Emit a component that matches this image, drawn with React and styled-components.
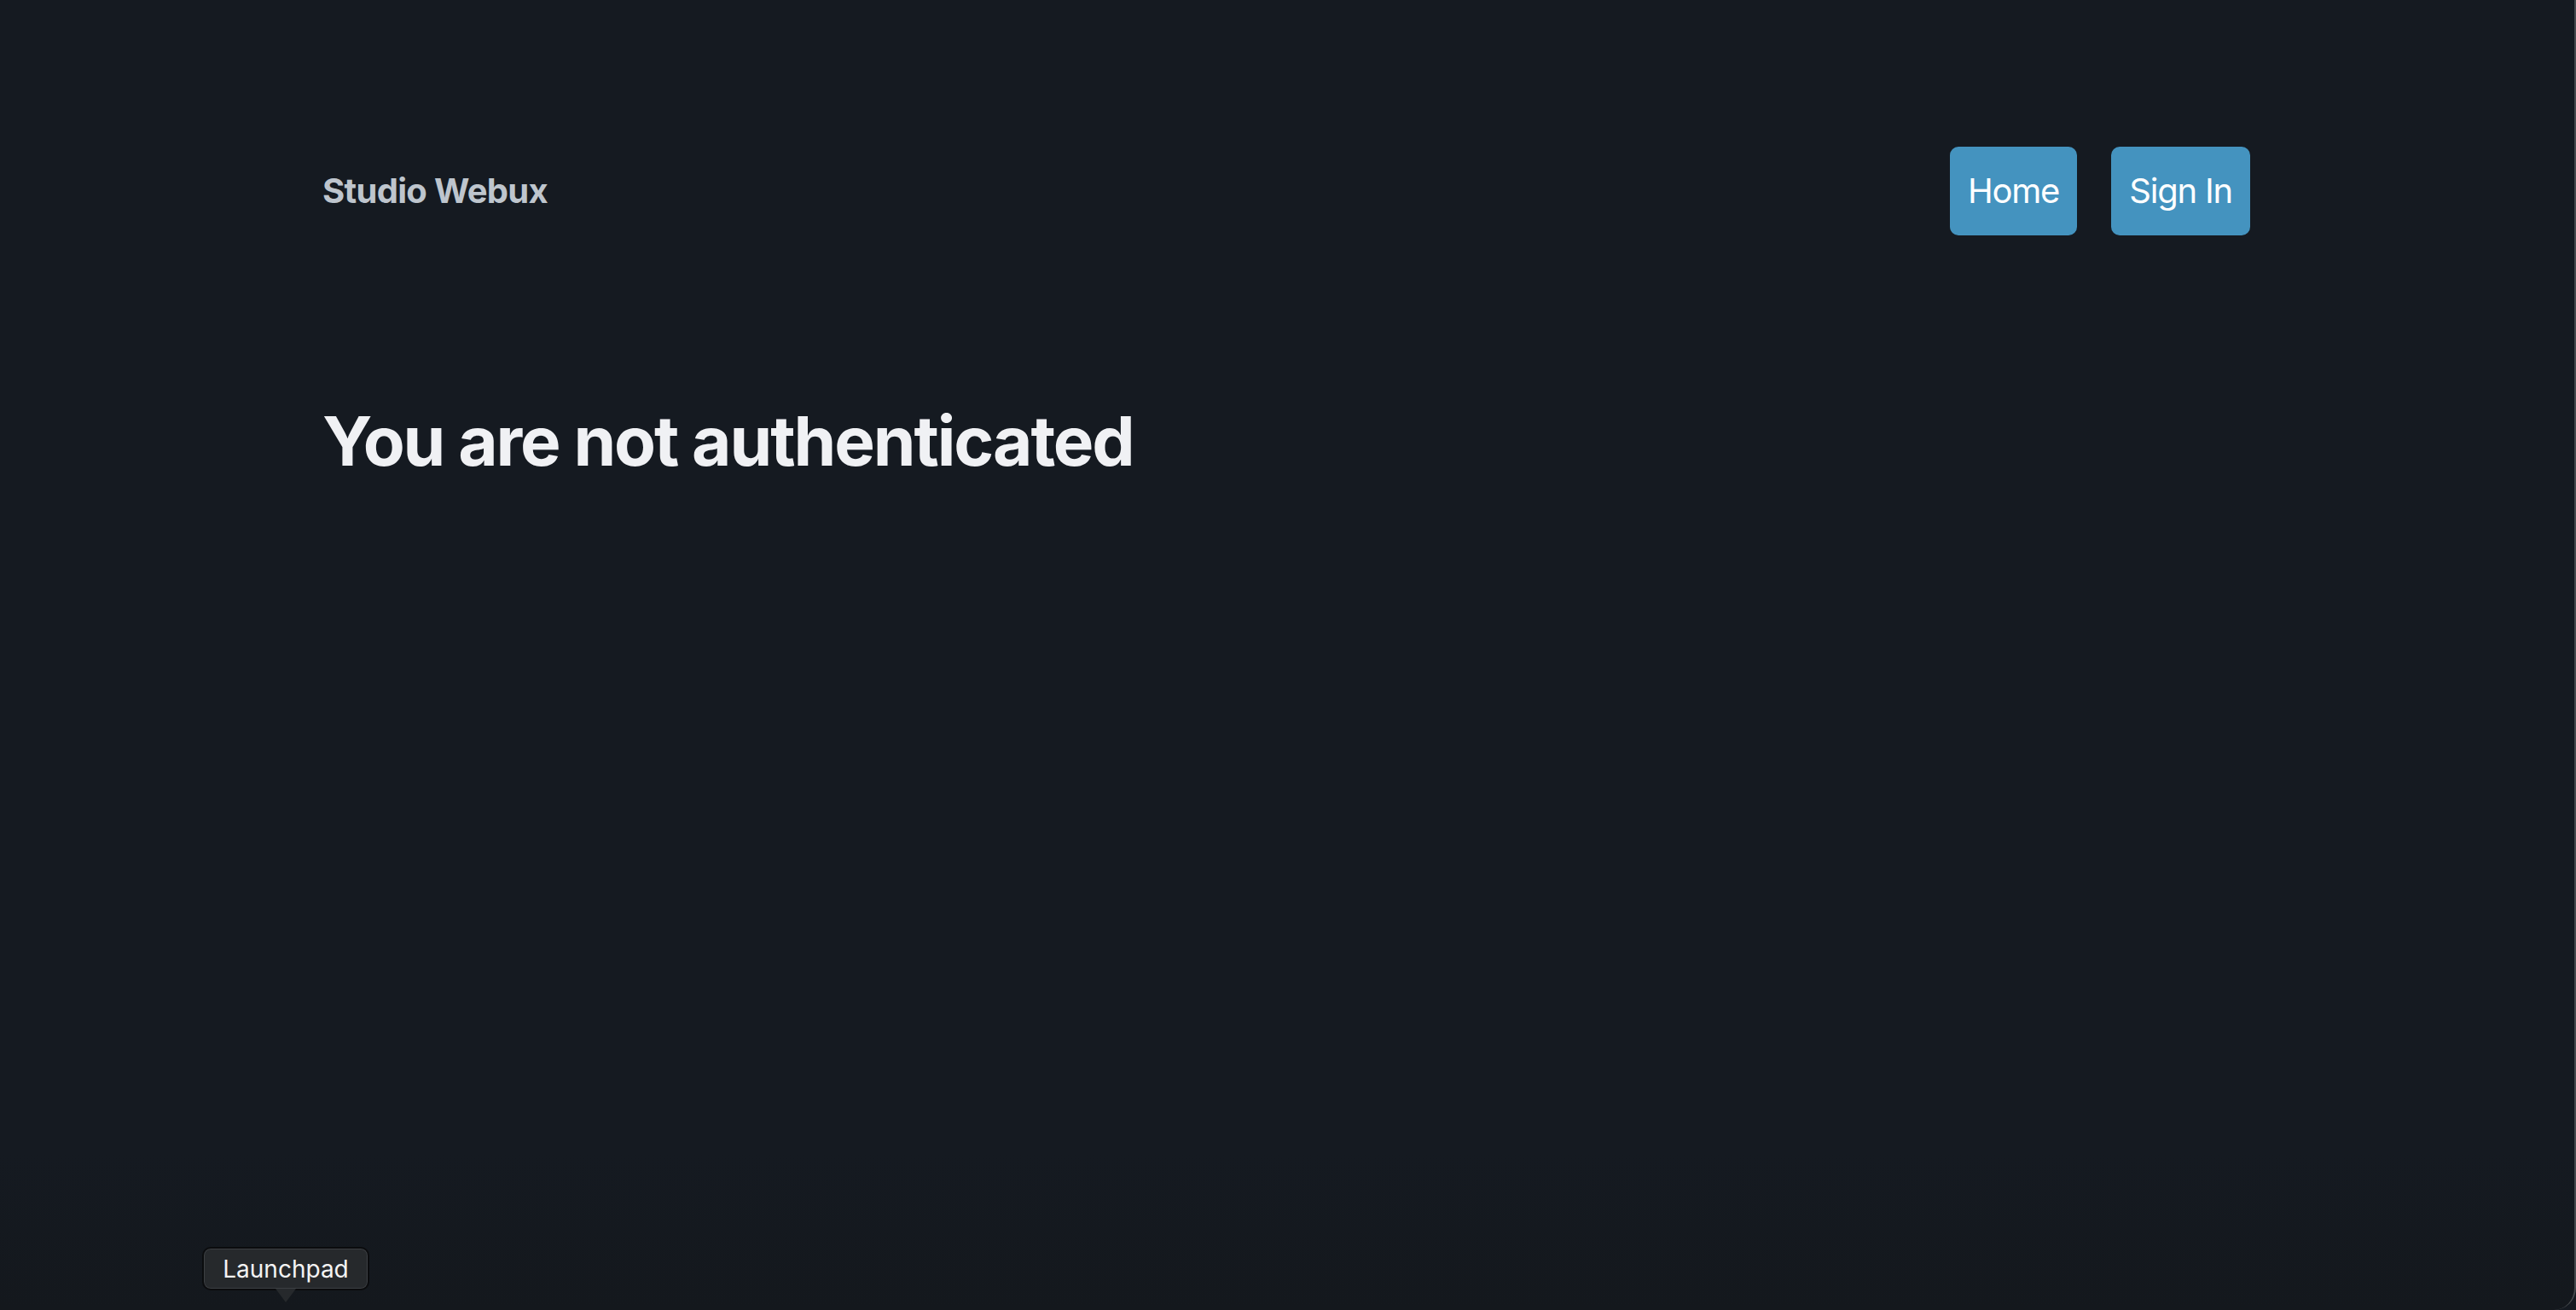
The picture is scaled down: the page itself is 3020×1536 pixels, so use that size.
import React from "react";
import styled, { createGlobalStyle } from "styled-components";

const Global = createGlobalStyle`
  html, body {
    margin: 0;
    padding: 0;
    background: #151a21;
  }
  body {
    font-family: Inter, "Noto Sans", "Liberation Sans", sans-serif;
  }
  * { box-sizing: border-box; }
`;

const Frame = styled.div`
  position: relative;
  height: 1536px;
  background: linear-gradient(to bottom, #151a21 0%, #151a21 88%, #14181d 100%);
  border-right: 2px solid #45494d;
  border-bottom-right-radius: 26px;
  overflow: hidden;
`;

const Container = styled.div`
  width: 2260px;
  margin: 0 0 0 378px;
  display: flex;
  flex-direction: column;
`;

const Header = styled.header`
  display: flex;
  align-items: center;
  justify-content: space-between;
  padding-top: 172px;
`;

const Brand = styled.div`
  font-size: 40px;
  font-weight: 700;
  line-height: 1;
  color: #bec5cd;
  letter-spacing: -0.7px;
`;

const Nav = styled.nav`
  display: flex;
  gap: 40px;
`;

const NavButton = styled.button`
  height: 104px;
  padding: 0 21px;
  border: none;
  border-radius: 10px;
  background: #4493bf;
  color: #ffffff;
  font-family: inherit;
  font-size: 40px;
  font-weight: 400;
  line-height: 1;
  letter-spacing: -1.2px;
  cursor: pointer;
`;

const Heading = styled.h1`
  margin: 193px 0 0;
  font-size: 80px;
  font-weight: 700;
  line-height: 1.2;
  color: #f0f1f4;
  letter-spacing: -2.1px;
`;

const Tooltip = styled.div`
  position: absolute;
  left: 237px;
  top: 1462px;
  width: 196px;
  height: 51px;
  display: flex;
  align-items: center;
  justify-content: center;
  background: #26292c;
  border: 2px solid #0b0c0e;
  box-shadow: inset 0 0 0 1px #3c3f43;
  border-radius: 10px;
  color: #f4f4f4;
  font-size: 28px;
  font-weight: 400;

  &::after {
    content: "";
    position: absolute;
    left: 50%;
    bottom: -16px;
    margin-left: -12px;
    width: 0;
    height: 0;
    border-left: 12px solid transparent;
    border-right: 12px solid transparent;
    border-top: 16px solid #26292c;
  }
`;

export default function App() {
  return (
    <>
      <Global />
      <Frame>
        <Container>
          <Header>
            <Brand>Studio Webux</Brand>
            <Nav>
              <NavButton>Home</NavButton>
              <NavButton>Sign In</NavButton>
            </Nav>
          </Header>
          <Heading>You are not authenticated</Heading>
        </Container>
        <Tooltip>Launchpad</Tooltip>
      </Frame>
    </>
  );
}
